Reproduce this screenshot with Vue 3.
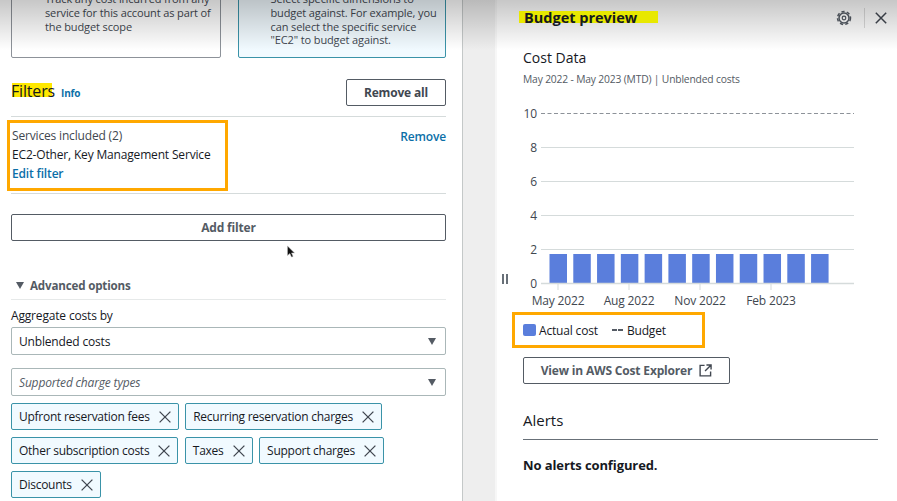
<script setup>
const yTicks = [
  { label: '10', y: 16.5 },
  { label: '8', y: 50.5 },
  { label: '6', y: 84.5 },
  { label: '4', y: 118.5 },
  { label: '2', y: 152.5 },
];
const xTicks = [
  { label: 'May 2022', x: 61 },
  { label: 'Aug 2022', x: 132 },
  { label: 'Nov 2022', x: 203 },
  { label: 'Feb 2023', x: 274 },
];
const bars = Array.from({ length: 12 }, (_, i) => 52.5 + i * 23.78);
const tagRows = [
  ['Upfront reservation fees', 'Recurring reservation charges'],
  ['Other subscription costs', 'Taxes', 'Support charges'],
  ['Discounts'],
];
</script>

<template>
  <div class="page">
    <div class="fade"></div>

    <main class="left">
      <div class="cards">
        <div class="card">Track any cost incurred from any service for this account as part of the budget scope</div>
        <div class="card cardActive">Select specific dimensions to budget against. For example, you can select the specific service "EC2" to budget against.</div>
      </div>

      <div class="filtersHead">
        <h2 class="filtersTitle"><span class="markShort"></span><span class="filtersText">Filters</span></h2>
        <a class="info">Info</a>
        <button type="button" class="btn removeAll">Remove all</button>
      </div>

      <div class="filterRow">
        <div class="filterBox">
          <div class="muted">Services included (2)</div>
          <div class="filterValue">EC2-Other, Key Management Service</div>
          <a class="link">Edit filter</a>
        </div>
        <a class="link removeLink">Remove</a>
      </div>

      <button type="button" class="btn addFilter">Add filter</button>

      <div class="advanced">
        <span class="caret"></span>
        <span>Advanced options</span>
      </div>

      <label class="fieldLabel">Aggregate costs by</label>
      <div class="select">
        <span>Unblended costs</span>
        <span class="caret"></span>
      </div>
      <div class="select selectPlaceholder">
        <em>Supported charge types</em>
        <span class="caret"></span>
      </div>

      <div v-for="(row, r) in tagRows" :key="r" class="tagRow">
        <span v-for="tag in row" :key="tag" class="tag">
          {{ tag }}
          <svg class="tagClose" viewBox="0 0 12 12" width="12" height="12">
            <path d="M.6.6l10.800 10.800M11.400.6L.6 11.400" fill="none" stroke="#414750" stroke-width="1.300" />
          </svg>
        </span>
      </div>

      <svg class="cursor" viewBox="0 0 10 14" width="10" height="14">
        <path d="M1.500 1v9.500l2.400-2 1.600 3.600 1.600-.7-1.600-3.500h3z" fill="#111" stroke="#bbb" stroke-width=".5" />
      </svg>
    </main>

    <div class="gutter"></div>

    <aside class="right">
      <span class="handle"></span>

      <header class="rightHead">
        <h2 class="rightTitle">Budget preview</h2>
        <svg class="gear" viewBox="0 0 16 16" width="16" height="16">
          <circle cx="8" cy="8" r="5" fill="none" stroke="#545b64" stroke-width="1.500" />
          <circle cx="8" cy="8" r="6.500" fill="none" stroke="#545b64" stroke-width="1.500" stroke-dasharray="3.200 2.250" />
          <circle cx="8" cy="8" r="1.800" fill="none" stroke="#545b64" stroke-width="1.200" />
        </svg>
        <span class="headDivider"></span>
        <svg class="close" viewBox="0 0 12 12" width="12" height="12">
          <path d="M.8.8l10.400 10.400M11.200.8L.8 11.200" fill="none" stroke="#414750" stroke-width="1.500" />
        </svg>
      </header>

      <h3 class="costTitle">Cost Data</h3>
      <p class="costSub">May 2022 - May 2023 (MTD) | Unblended costs</p>

      <svg class="chart" viewBox="0 0 357 208" width="357" height="208">
        <g v-for="t in yTicks" :key="t.label">
          <line
            x1="44"
            x2="357"
            :y1="t.y"
            :y2="t.y"
            :stroke="t.label === '10' ? '#8d9299' : '#d5dbdb'"
            :stroke-dasharray="t.label === '10' ? '4 2.500' : null"
          />
          <text x="40" :y="t.y + 4.500" text-anchor="end" class="axis">{{ t.label }}</text>
        </g>
        <text x="40" y="191" text-anchor="end" class="axis">0</text>
        <rect v-for="x in bars" :key="x" :x="x" y="157" width="17.500" height="29.500" fill="#5a7edc" />
        <line x1="44" x2="357" y1="186.500" y2="186.500" stroke="#d5dbdb" stroke-width="1.500" />
        <g v-for="t in xTicks" :key="t.label">
          <line :x1="t.x" :x2="t.x" y1="187" y2="193" stroke="#d5dbdb" />
          <text :x="t.x" y="207.500" text-anchor="middle" class="axis">{{ t.label }}</text>
        </g>
      </svg>

      <div class="legend">
        <span class="swatch"></span>
        <span class="legendActual">Actual cost</span>
        <span class="dashes"></span>
        <span>Budget</span>
      </div>

      <button type="button" class="btn explorer">
        View in AWS Cost Explorer
        <svg viewBox="0 0 14 14" width="13" height="13">
          <path d="M6 1.500H1.200v11.300h11.300V8M8 1h5v5M13 1L6.500 7.500" fill="none" stroke="#414750" stroke-width="1.500" />
        </svg>
      </button>

      <h3 class="alertsTitle">Alerts</h3>
      <p class="noAlerts">No alerts configured.</p>
    </aside>
  </div>
</template>

<style scoped>
.page {
  background: #fff;
  color: #16191f;
  display: flex;
  font-family: 'Open Sans', sans-serif;
  font-size: 12px;
  height: 501px;
  letter-spacing: -0.17px;
  overflow: hidden;
  position: relative;
  width: 897px;
}

.fade {
  background: linear-gradient(rgba(0, 0, 0, 0.22), rgba(0, 0, 0, 0) 50px);
  height: 50px;
  left: 0;
  pointer-events: none;
  position: absolute;
  top: 0;
  width: 100%;
  z-index: 2;
}

.left {
  box-sizing: border-box;
  flex: none;
  padding: 0 16px 0 11px;
  position: relative;
  width: 462px;
}

.cards {
  display: flex;
  gap: 17px;
  margin-top: -9px;
}

.card {
  border: 1px solid #8d9299;
  border-radius: 2px;
  box-sizing: border-box;
  color: #414750;
  flex: 1;
  font-size: 11px;
  height: 67px;
  letter-spacing: -0.12px;
  line-height: 13.800px;
  padding: 0 8px 0 33px;
}

.cardActive {
  background: #f1faff;
  border-color: #3a93a8;
  padding-left: 32px;
}

.filtersHead {
  align-items: center;
  border-bottom: 1px solid #d5dbdb;
  box-sizing: border-box;
  display: flex;
  height: 59px;
  padding-top: 11px;
}

.filtersTitle {
  font-size: 16px;
  font-weight: 400;
  line-height: 22px;
  margin: -3px 0 0;
  position: relative;
}

.filtersText {
  position: relative;
}

.markShort {
  background: #ffe800;
  height: 14px;
  left: 1px;
  position: absolute;
  top: 3px;
  width: 40px;
}

.info {
  color: #0b6fa8;
  font-size: 10px;
  font-weight: 700;
  margin-left: 6px;
}

.btn {
  background: #fff;
  border: 1px solid #545b64;
  border-radius: 2px;
  color: #414750;
  font-family: inherit;
  font-size: 12px;
  font-weight: 700;
  height: 27px;
  letter-spacing: inherit;
  padding: 0;
}

.removeAll {
  margin-left: auto;
  width: 100px;
}

.filterRow {
  border-bottom: 1px solid #d5dbdb;
  box-sizing: border-box;
  display: flex;
  height: 77px;
  justify-content: space-between;
  padding-top: 3px;
}

.filterBox {
  border: 3px solid #ffa800;
  box-sizing: border-box;
  height: 71px;
  line-height: 18.800px;
  margin-left: -4px;
  padding: 4px 0 0 2px;
  width: 221px;
}

.muted {
  color: #414750;
}

.link {
  color: #0b6fa8;
  font-weight: 600;
}

.removeLink {
  line-height: 18px;
  margin-top: 8px;
}

.addFilter {
  color: #545b64;
  display: block;
  margin-top: 20px;
  width: 435px;
}

.advanced {
  align-items: center;
  border-bottom: 1px solid #e6e9e9;
  color: #545b64;
  display: flex;
  font-size: 11.600px;
  font-weight: 700;
  gap: 6px;
  height: 28px;
  margin-top: 28px;
  padding: 2px 0 0 5px;
}

.caret {
  border-left: 4.500px solid transparent;
  border-right: 4.500px solid transparent;
  border-top: 7px solid #545b64;
}

.fieldLabel {
  display: block;
  line-height: 16px;
  margin-top: 8px;
}

.select {
  align-items: center;
  border: 1px solid #aab7b8;
  border-radius: 2px;
  box-sizing: border-box;
  display: flex;
  height: 28px;
  justify-content: space-between;
  margin-top: 3px;
  padding: 0 9px 0 7px;
  width: 435px;
}

.selectPlaceholder {
  color: #545b64;
  margin-top: 13px;
}

.tagRow {
  display: flex;
  gap: 6.500px;
  margin-top: 7px;
}

.tag {
  align-items: center;
  background: #f1faff;
  border: 1px solid #3a93a8;
  border-radius: 2px;
  box-sizing: border-box;
  display: flex;
  gap: 9px;
  height: 27px;
  letter-spacing: -0.26px;
  padding: 0 7px;
}

.tagClose {
  flex: none;
}

.cursor {
  left: 286px;
  position: absolute;
  top: 245px;
}

.gutter {
  background: #eeeeee;
  border-left: 1px solid #c4c8c8;
  border-right: 2px solid #f7f7f7;
  box-sizing: border-box;
  flex: none;
  width: 35px;
}

.right {
  box-sizing: border-box;
  flex: 1;
  padding: 0 19px 0 26px;
  position: relative;
}

.handle {
  border-left: 2px solid #687078;
  border-right: 2px solid #687078;
  height: 10px;
  left: 5px;
  position: absolute;
  top: 274px;
  width: 2px;
}

.rightHead {
  align-items: center;
  display: flex;
  height: 36px;
  margin-left: -4px;
}

.rightTitle {
  background: linear-gradient(#e8e800, #e8e800) no-repeat left 0 top 11px / 139px 12px;
  flex: 1;
  font-size: 14.500px;
  font-weight: 700;
  letter-spacing: 0;
  line-height: 36px;
  margin: 0;
  padding-left: 5px;
  position: relative;
  z-index: 3;
}

.gear {
  margin-right: 12px;
}

.headDivider {
  background: #dcdcdc;
  height: 20px;
  margin-right: 10px;
  width: 1px;
}

.close {
  margin-right: -9px;
}

.costTitle {
  font-size: 14px;
  font-weight: 400;
  letter-spacing: 0;
  line-height: 20px;
  margin: 12px 0 0;
}

.costSub {
  color: #545b64;
  font-size: 10.300px;
  line-height: 14px;
  margin: 4px 0 0;
}

.chart {
  display: block;
  margin: 11px 0 0 -26px;
  overflow: visible;
}

.axis {
  fill: #414750;
  font-family: 'Open Sans', sans-serif;
  font-size: 12px;
}

.legend {
  align-items: center;
  box-shadow: 0 0 0 3px #ffa800 inset;
  box-sizing: border-box;
  display: flex;
  height: 36px;
  margin: 7px 0 0 -11px;
  padding-left: 11px;
  width: 193px;
}

.swatch {
  background: #5a7edc;
  border-radius: 2px;
  height: 12px;
  width: 13px;
}

.legendActual {
  margin: 0 14px 0 3px;
}

.dashes {
  background: linear-gradient(90deg, #545b64 5px, transparent 5px 6px, #545b64 6px);
  height: 2px;
  margin-right: 4px;
  width: 11px;
}

.explorer {
  align-items: center;
  color: #545b64;
  display: flex;
  gap: 7px;
  justify-content: center;
  margin-top: 9px;
  width: 207px;
}

.alertsTitle {
  border-bottom: 1.500px solid #687078;
  font-size: 15px;
  font-weight: 400;
  letter-spacing: 0;
  line-height: 26px;
  margin: 23px 0 0;
  padding-bottom: 6px;
}

.noAlerts {
  font-size: 13px;
  font-weight: 700;
  letter-spacing: -0.1px;
  line-height: 18px;
  margin: 16px 0 0;
}
</style>
